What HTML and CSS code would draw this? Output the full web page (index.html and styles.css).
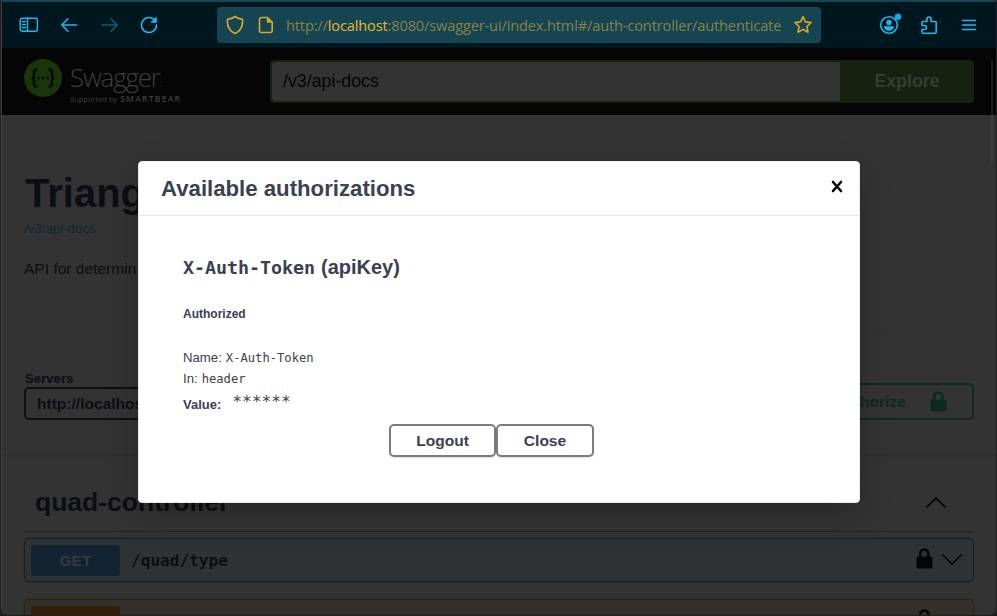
FILE: index.html
```html
<!DOCTYPE html>
<html lang="en">
<head>
<meta charset="utf-8">
<title>Swagger UI</title>
<link rel="stylesheet" href="styles.css">
</head>
<body>
<div class="window">
  <nav class="toolbar">
    <svg class="ic sidebar" width="20" height="16" viewBox="0 0 20 16"><rect x="1.200" y="1.200" width="17.200" height="13" rx="2"/><path d="M8.500 1v13M3.500 4.500h3M3.500 7.500h3M3.500 10.500h3"/></svg>
    <svg class="ic back" width="18" height="16" viewBox="0 0 18 16"><path d="M16.500 8H2M8 1.800L1.800 8L8 14.200"/></svg>
    <svg class="ic forward" width="18" height="16" viewBox="0 0 18 16"><path d="M1 8h15M10 1.800L16.200 8L10 14.200"/></svg>
    <svg class="ic reload" width="18" height="18" viewBox="0 0 18 18"><path d="M15.200 4.800A7.500 7.500 0 1 0 16.500 9"/><path class="solid" d="M16.500 1v5.500H11z"/></svg>
    <div class="urlbar">
      <svg class="ic shield" width="18" height="20" viewBox="0 0 18 20"><path d="M9 1.500C11 3 14 4 16.500 4.300C17 10 15 16 9 18.500C3 16 1 10 1.500 4.300C4 4 7 3 9 1.500z"/></svg>
      <svg class="ic page-icon" width="16" height="18" viewBox="0 0 16 18"><path d="M3 1.500h6.500L14.200 6v8.500a2 2 0 0 1-2 2H3.500a2 2 0 0 1-2-2V3.500a2 2 0 0 1 2-2z"/><path class="solid" d="M9 1.500V6.500H14z"/></svg>
      <span class="url">http://<b>localhost</b>:8080/swagger-ui/index.html#/auth-controller/authenticate</span>
      <svg class="ic star" width="20" height="20" viewBox="0 0 20 20"><path d="M10 1.700l2.400 5.200 5.600.7-4.100 3.900 1.100 5.700-5-2.800-5 2.800 1.100-5.700L2 7.600l5.600-.7z"/></svg>
    </div>
    <svg class="ic account" width="24" height="22" viewBox="0 0 24 22"><circle cx="10" cy="12" r="8.300"/><circle class="solid" cx="10" cy="9.500" r="2.500"/><path class="solid" d="M5.500 13.500h9c0 3-2 4-4.500 4s-4.500-1-4.500-4z"/><circle class="dot" cx="19" cy="3.800" r="3.200"/></svg>
    <svg class="ic puzzle" width="18" height="20" viewBox="0 0 18 20"><path d="M3 6.500H7V4a2 2 0 0 1 4 0V6.500H15.200a1 1 0 0 1 1 1V17.200a1 1 0 0 1-1 1H3a1 1 0 0 1-1-1V14.500H4.500a2 2 0 0 0 0-4H2V7.500a1 1 0 0 1 1-1z"/></svg>
    <svg class="ic menu" width="14" height="12" viewBox="0 0 14 12"><path d="M.5 1.500h13M.5 6h13M.5 10.500h13"/></svg>
  </nav>

  <header class="topbar">
    <svg class="logo" width="38" height="38" viewBox="0 0 38 38"><circle cx="19" cy="19" r="19"/><path d="M13.500 10.500c-3 0-3.500 1-3.500 3v2.500c0 2-.8 3-2.500 3c1.700 0 2.500 1 2.500 3v2.500c0 2 .5 3 3.500 3M24.500 10.500c3 0 3.500 1 3.500 3v2.500c0 2 .8 3 2.500 3c-1.700 0-2.500 1-2.500 3v2.500c0 2-.5 3-3.500 3M13.500 19h2.200M18 19h2.200M22.500 19h2.200"/></svg>
    <div class="brand"><div class="name">Swagger<small>.</small></div><div class="by">Supported by <b>SMARTBEAR</b></div></div>
    <div class="search"><span class="query">/v3/api-docs</span><span class="explore">Explore</span></div>
  </header>

  <main class="page">
    <section class="info">
      <h1>Triang</h1>
      <a class="docs">/v3/api-docs</a>
      <p>API for determin</p>
    </section>
    <section class="schemes">
      <div class="servers"><label>Servers</label><div class="select">http://localhost</div></div>
      <div class="authorize">Authorize <svg class="lock" width="17" height="21" viewBox="0 0 17 21"><path class="shackle" d="M4.300 9V5.500a4 4 0 0 1 8 0V9"/><rect x=".5" y="8.500" width="16" height="12" rx="2"/></svg></div>
    </section>
    <section class="tag">
      <h2>quad-controller <svg class="chev" width="20" height="12" viewBox="0 0 20 12"><path d="M1 11l9-9 9 9"/></svg></h2>
      <div class="op get"><span class="method">GET</span><code>/quad/type</code><svg class="lock" width="17" height="21" viewBox="0 0 17 21"><path class="shackle" d="M4.300 9V5.500a4 4 0 0 1 8 0V9"/><rect x=".5" y="8.500" width="16" height="12" rx="2"/></svg><svg class="chev" width="20" height="12" viewBox="0 0 20 12"><path d="M1 1l9 9 9-9"/></svg></div>
      <div class="op put"><span class="method">PUT</span><code>/quad/type</code><svg class="lock" width="17" height="21" viewBox="0 0 17 21"><path class="shackle" d="M4.300 9V5.500a4 4 0 0 1 8 0V9"/><rect x=".5" y="8.500" width="16" height="12" rx="2"/></svg><svg class="chev" width="20" height="12" viewBox="0 0 20 12"><path d="M1 1l9 9 9-9"/></svg></div>
    </section>
  </main>
</div>
<div class="scroll"></div>

<div class="modal" role="dialog">
  <div class="modal-head"><h3>Available authorizations</h3><svg width="12" height="13" viewBox="0 0 12 13"><path d="M2 2l8 9M10 2l-8 9"/></svg></div>
  <div class="modal-body">
    <h4><code>X-Auth-Token</code>(apiKey)</h4>
    <h6>Authorized</h6>
    <p>Name: <code>X-Auth-Token</code></p>
    <p>In: <code>header</code></p>
    <p class="value"><b>Value:</b><code>******</code></p>
    <div class="buttons"><button class="logout">Logout</button><button class="close">Close</button></div>
  </div>
</div>
</body>
</html>
```
FILE: styles.css
```css
* { box-sizing: border-box; }
html, body { height: 100%; }
body { margin: 0; overflow: hidden; background: #202020; font-family: "Liberation Sans", sans-serif; position: relative; }
h1, h2, h3, h4, h6, p { margin: 0; }
svg { flex: none; display: block; }
code { font-family: "DejaVu Sans Mono", monospace; }

.window { height: 615px; margin: 0 1px; border-left: 1px solid #414141; border-radius: 0 0 7px 7px; overflow: hidden; background: #333; display: flex; flex-direction: column; }

.toolbar { flex: none; height: 48px; border-top: 2px solid #164553; background: #00171f; display: flex; align-items: center; padding-left: 17px; }
.ic { fill: none; stroke: #1cb9ec; stroke-width: 1.6; stroke-linecap: round; stroke-linejoin: round; }
.ic .solid { fill: #1cb9ec; stroke-width: .5; }
.sidebar { stroke-width: 1.4; }
.back { margin-left: 21px; }
.forward { margin-left: 23px; stroke: #075f7c; }
.reload { margin-left: 21px; }
.urlbar { width: 604px; height: 36px; margin-left: 59px; background: #164552; border-radius: 4px; display: flex; align-items: center; padding-left: 9px; }
.urlbar .ic { stroke: #d9a72b; }
.urlbar .ic .solid { fill: #d9a72b; }
.page-icon { margin-left: 14px; }
.url { width: 496px; margin-left: 12px; font: 14.6px/20px "Open Sans", sans-serif; letter-spacing: -.15px; color: #868247; white-space: nowrap; }
.url b { font-weight: 400; color: #e5b72b; }
.star { margin-left: 11px; }
.account { margin: -2px 0 0 58px; }
.account .dot { fill: #0fa9f5; stroke: none; }
.puzzle { margin: -1px 0 0 17px; }
.menu { margin-left: 24px; stroke-width: 1.4; }

.topbar { flex: none; height: 67px; background: #050505; display: flex; align-items: flex-start; padding: 11px 0 0 22px; }
.logo circle { fill: #1b350b; }
.logo path { fill: none; stroke: #070a05; stroke-width: 2.6; }
.brand { flex: none; width: 207px; padding-left: 8px; color: #3e3e3e; }
.name { font: 300 26px/36px "Open Sans", sans-serif; letter-spacing: -1.2px; height: 35px; }
.name small { font-size: 12px; }
.by { font: 7.5px/10px "Open Sans", sans-serif; white-space: nowrap; }
.by b { font-size: 8.5px; letter-spacing: 1.25px; margin-left: 1px; font-weight: 600; }
.search { flex: none; width: 704px; height: 43px; margin: 1px 0 0 1px; background: #162110; border-radius: 4px; padding: 2px 0 2px 2px; display: flex; line-height: 39px; font-size: 17.8px; }
.query { width: 568px; padding-left: 11px; background: #333; border-radius: 4px 0 0 4px; color: #050505; }
.explore { flex: 1; text-align: center; font-weight: 700; color: #363c34; }

.info { height: 217px; padding: 55px 0 0 22px; color: #0c0e13; }
h1 { font-size: 40px; line-height: 46px; padding-left: 1px; }
.docs { display: block; margin-top: 5px; font-size: 13.3px; line-height: 16px; color: #112438; }
.info p { margin-top: 23px; font-size: 15.55px; line-height: 18px; }
.schemes { height: 123px; padding: 38px 22px 0 22px; border-bottom: 1px solid #2c2c2c; box-shadow: 0 1px 2px rgba(0,0,0,.1); display: flex; justify-content: space-between; }
label { display: block; padding: 1px 0 0 1px; font-size: 13.2px; font-weight: 700; line-height: 16px; color: #0c0e13; }
.select { width: 230px; height: 33px; border: 2px solid #0d0f12; border-radius: 5px; padding-left: 11px; font-size: 15.55px; font-weight: 700; line-height: 29px; color: #0c0e13; }
.authorize { width: 156px; height: 37px; margin-top: 13px; border: 2px solid #0f291e; border-radius: 5px; display: flex; justify-content: space-between; align-items: center; padding: 0 25px 0 14px; font-size: 15.55px; font-weight: 700; color: #0f291e; }
.lock { fill: #050505; }
.lock .shackle { fill: none; stroke: #050505; stroke-width: 2.7; }
.authorize .lock { fill: #0f291e; }
.authorize .shackle { stroke: #0f291e; }
.tag { padding: 16px 22px 0 22px; }
h2 { height: 61px; border-bottom: 1px solid #252323; display: flex; align-items: center; justify-content: space-between; padding: 2px 28px 0 11px; font-size: 26.5px; color: #0c0e13; margin-bottom: 6px; }
.chev { fill: none; stroke: #050505; stroke-width: 1.7; stroke-linecap: round; }
.op { height: 44px; margin-bottom: 17px; border: 1px solid #142230; border-radius: 5px; display: flex; align-items: center; padding: 0 11px 0 6px; box-shadow: 0 0 3px rgba(0,0,0,.16); }
.get { background: #2f3133; }
.put { background: #33302c; border-color: #32220a; }
.method { width: 89px; height: 31px; border-radius: 3px; background: #132332; color: #34393f; text-align: center; font-size: 15.5px; font-weight: 700; line-height: 31px; margin-right: 11px; }
.put .method { background: #32200a; color: #453b2e; }
.op code { flex: 1; font-size: 16.1px; font-weight: 700; color: #0c0e13; }
.op .lock { margin-right: 9px; margin-top: -3px; }

.scroll { position: absolute; left: 991px; top: 60px; width: 2px; height: 102px; background: rgba(100,100,100,.25); border-radius: 1px; }

.modal { position: absolute; left: 138px; top: 161px; width: 722px; height: 342px; background: #fff; border: 1px solid #ebebeb; border-radius: 4px; box-shadow: 0 11px 33px rgba(0,0,0,.22); color: #3b4151; }
.modal-head { height: 54px; border-bottom: 1px solid #e6e6e6; display: flex; align-items: center; justify-content: space-between; padding: 0 16px 0 22px; }
.modal-head path { fill: none; stroke: #000; stroke-width: 2.6; stroke-linecap: round; }
.modal-head svg { margin-top: -4px; }
h3 { font-size: 22.2px; line-height: 26px; }
.modal-body { padding: 38px 44px 0; }
h4 { height: 26px; display: flex; align-items: center; font-size: 20px; }
h4 code { font-size: 18.3px; width: 138px; }
h6 { height: 20px; margin: 24px 0 23px; font-size: 12px; line-height: 20px; }
.modal-body p { height: 21px; line-height: 21px; font-size: 13.2px; display: flex; align-items: center; }
.modal-body p code { font-size: 12.15px; margin: 1px 0 0 4px; }
.modal-body .value { height: 26px; line-height: 26px; padding-top: 5px; font-size: 13px; }
.modal-body .value code { font-size: 16.2px; margin: -5px 0 0 11px; }
.buttons { display: flex; justify-content: center; margin: 9px 15px 0 0; }
button { height: 33px; padding: 0; font: 700 15.55px "Liberation Sans", sans-serif; background: #fff; color: #3b4151; border: 2px solid #7c7c7c; border-radius: 5px; box-shadow: 0 1px 2px rgba(0,0,0,.12); }
.logout { width: 107px; }
.close { width: 98px; }
```
